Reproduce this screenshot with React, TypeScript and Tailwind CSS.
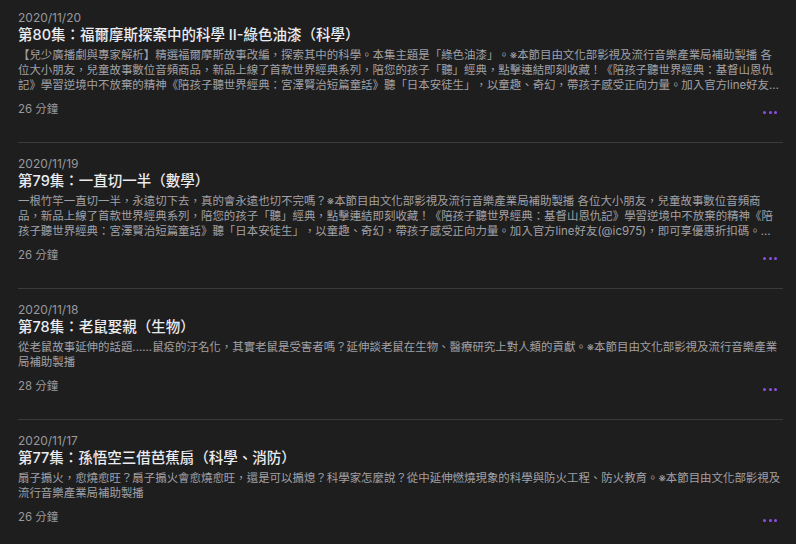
const episodes = [
  {
    date: "2020/11/20",
    title: "第80集：福爾摩斯探案中的科學 II-綠色油漆（科學）",
    summary:
      "【兒少廣播劇與專家解析】精選福爾摩斯故事改編，探索其中的科學。本集主題是「綠色油漆」。※本節目由文化部影視及流行音樂產業局補助製播 各位大小朋友，兒童故事數位音頻商品，新品上線了首款世界經典系列，陪您的孩子「聽」經典，點擊連結即刻收藏！《陪孩子聽世界經典：基督山恩仇記》學習逆境中不放棄的精神《陪孩子聽世界經典：宮澤賢治短篇童話》聽「日本安徒生」，以童趣、奇幻，帶孩子感受正向力量。加入官方line好友(@ic975)，即可享優惠折扣碼。",
    duration: "26 分鐘",
  },
  {
    date: "2020/11/19",
    title: "第79集：一直切一半（數學）",
    summary:
      "一根竹竿一直切一半，永遠切下去，真的會永遠也切不完嗎？※本節目由文化部影視及流行音樂產業局補助製播 各位大小朋友，兒童故事數位音頻商品，新品上線了首款世界經典系列，陪您的孩子「聽」經典，點擊連結即刻收藏！《陪孩子聽世界經典：基督山恩仇記》學習逆境中不放棄的精神《陪孩子聽世界經典：宮澤賢治短篇童話》聽「日本安徒生」，以童趣、奇幻，帶孩子感受正向力量。加入官方line好友(@ic975)，即可享優惠折扣碼。 https://lin.ee/ic975-official-account",
    duration: "26 分鐘",
  },
  {
    date: "2020/11/18",
    title: "第78集：老鼠娶親（生物）",
    summary:
      "從老鼠故事延伸的話題......鼠疫的汙名化，其實老鼠是受害者嗎？延伸談老鼠在生物、醫療研究上對人類的貢獻。※本節目由文化部影視及流行音樂產業局補助製播",
    duration: "28 分鐘",
  },
  {
    date: "2020/11/17",
    title: "第77集：孫悟空三借芭蕉扇（科學、消防）",
    summary:
      "扇子搧火，愈燒愈旺？扇子搧火會愈燒愈旺，還是可以搧熄？科學家怎麼說？從中延伸燃燒現象的科學與防火工程、防火教育。※本節目由文化部影視及流行音樂產業局補助製播",
    duration: "26 分鐘",
  },
];

function MoreButton() {
  return (
    <button className="flex items-center gap-[2.5px] mr-[6px] mt-[5px]" aria-label="更多">
      <span className="w-[3px] h-[3px] rounded-full bg-[#8e4fe8]" />
      <span className="w-[3px] h-[3px] rounded-full bg-[#8e4fe8]" />
      <span className="w-[3px] h-[3px] rounded-full bg-[#8e4fe8]" />
    </button>
  );
}

export default function App() {
  return (
    <div
      className="min-h-screen bg-[#1e1e1e] pl-[18px] pr-[13px] [text-spacing-trim:space-all]"
      style={{fontFamily: '"Inter", "Noto Sans CJK TC", sans-serif'}}
    >
      <ul>
        {episodes.map((ep) => (
          <li key={ep.date} className="pt-[13px] first:pt-[10px] pb-[25px] border-b border-[#3a3a3c]">
            <div className="text-[12px] leading-[16px] text-[#98989d]">{ep.date}</div>
            <h2 className="text-[14.5px] leading-[18px] font-medium text-[#ebebf0]">{ep.title}</h2>
            <p className="mt-[4px] text-[11.45px] leading-[15px] text-[#a1a1a6] line-clamp-3">
              {ep.summary}
            </p>
            <div className="mt-[9px] flex items-center justify-between">
              <span className="text-[11.45px] leading-[15px] text-[#98989d]">{ep.duration}</span>
              <MoreButton />
            </div>
          </li>
        ))}
      </ul>
    </div>
  );
}
